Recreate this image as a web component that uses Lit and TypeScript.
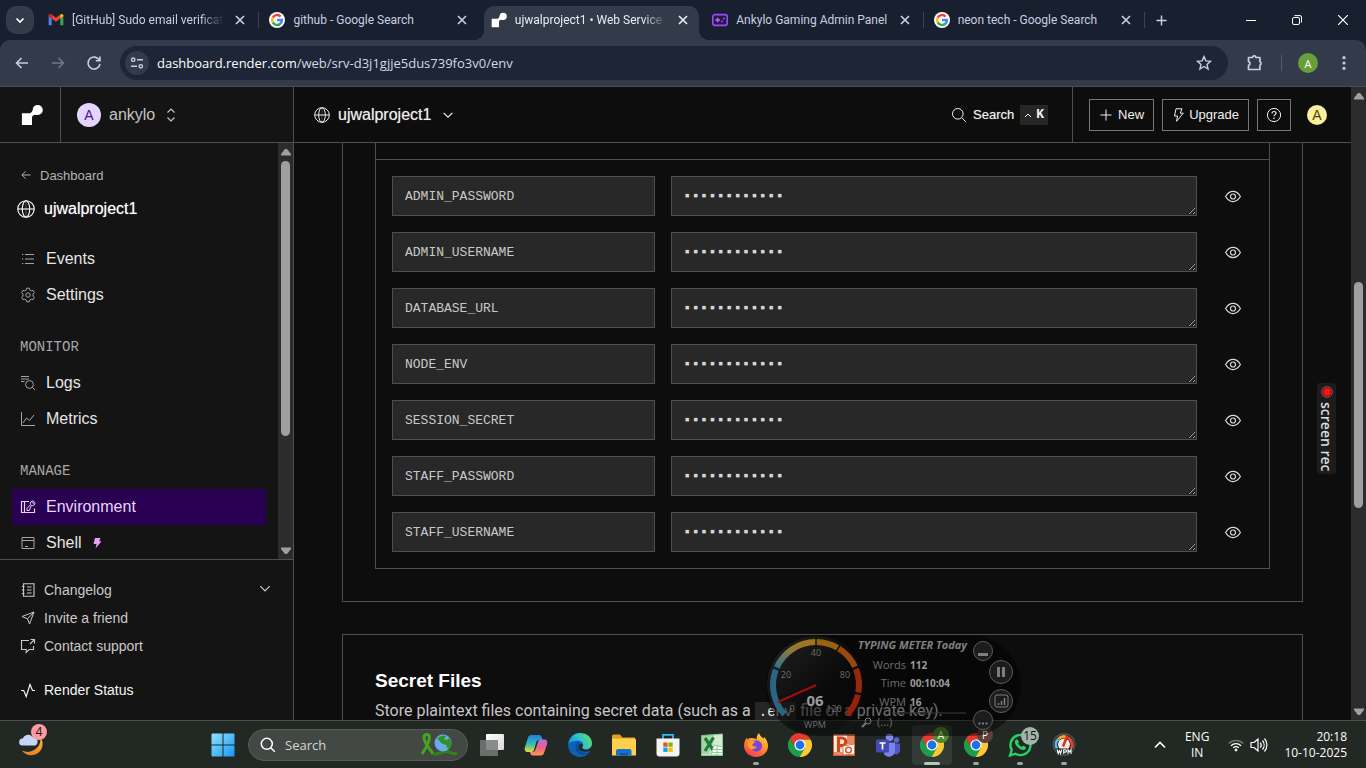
import { LitElement, html, svg, css, TemplateResult } from "lit";
import { customElement, property } from "lit/decorators.js";
import { classMap } from "lit/directives/class-map.js";

const line = (size: number, body: unknown, box = 16) => html`<svg
  width=${size}
  height=${size}
  viewBox="0 0 ${box} ${box}"
  fill="none"
  stroke="currentColor"
  aria-hidden="true"
>${body}</svg>`;
const pic = (size: number, body: unknown, box = 24) => html`<svg
  width=${size}
  height=${size}
  viewBox="0 0 ${box} ${box}"
  aria-hidden="true"
>${body}</svg>`;

/* ---------- line icons ---------- */
const globe = (s: number) => line(s, svg`<circle cx="8" cy="8" r="7.3"/><ellipse cx="8" cy="8" rx="3.3" ry="7.3"/><path d="M.7 8h14.6"/><path d="M8 .7v14.6" stroke-opacity=".25"/>`);
const chevronDown = (s: number) => line(s, svg`<path d="M3 5.5l5 5 5-5" stroke-width="1.3"/>`);
const chevronUpDown = line(16, svg`<path d="M4.500 5.500L8 2l3.500 3.500M4.500 10.500L8 14l3.500-3.500" stroke-width="1.200"/>`);
const searchIcon = (s: number) => line(s, svg`<circle cx="6.8" cy="6.8" r="5.3"/><path d="M10.8 10.8l4 4"/>`);
const cross = line(10, svg`<path d="M1 1l8 8M9 1l-8 8" stroke-width="1.7"/>`, 10);
const plus = (s: number, w: number) => line(s, svg`<path d="M6 .5v11M.5 6h11" stroke-width=${w}/>`, 12);
const eye = line(16, svg`<path d="M.6 8.500C2.600 5 5 3.400 8 3.400S13.400 5 15.400 8.500C13.400 12 11 13.600 8 13.600S2.600 12 .6 8.500z" stroke-width="1.200"/><circle cx="8" cy="8.500" r="2.500" stroke-width="1.200"/>`);
const bolt = line(14, svg`<path d="M5 .8h6L9.300 5.200h3L5.500 13.300 6.600 8H3.500z"/>`, 14);
const backArrow = (s: number, w: number) => line(s, svg`<path d="M14 8H2.500M7.500 3L2.500 8l5 5" stroke-width=${w}/>`);
const forwardArrow = line(16, svg`<path d="M2 8h11.500M8.500 3l5 5-5 5" stroke-width="1.500"/>`);
const reload = line(16, svg`<path d="M13.400 5.300A6 6 0 1 0 14 8.800M14 1.500v4.300H9.700" stroke-width="1.600"/>`);
const tune = line(14, svg`<circle cx="3.200" cy="3.700" r="1.700" stroke-width="1.400"/><path d="M7 3.700h6M1 10.300h6" stroke-width="1.400"/><circle cx="10.800" cy="10.300" r="1.700" stroke-width="1.400"/>`, 14);
const star = line(16, svg`<path d="M8 1.600l1.900 4.300 4.700.4-3.600 3.100 1.100 4.600L8 11.500 3.900 14 5 9.400 1.400 6.300l4.700-.4z" stroke-width="1.400"/>`);
const puzzle = line(18, svg`<path d="M2.500 3.500h4a1.700 1.700 0 0 1 3.400 0h4v4.300a1.800 1.800 0 0 1 0 3.400v4.300H2.500v-4.200a1.900 1.900 0 0 0 0-3.700z" stroke-width="1.700" stroke-linejoin="round"/>`, 18);
const dots = pic(16, svg`<g fill="#c3c8db"><circle cx="8" cy="2.700" r="1.600"/><circle cx="8" cy="8" r="1.600"/><circle cx="8" cy="13.300" r="1.600"/></g>`, 16);
const help = line(16, svg`<circle cx="8" cy="8" r="6.600"/><path d="M6 6.500C6 5.300 6.800 4.500 8 4.500s2 .7 2 1.800c0 1.300-2 1.400-2 3M8 10.600v1.400" stroke-width="1.200"/>`);

const navIcons: Record<string, TemplateResult> = {
  events: line(14, svg`<path d="M4 2.500h9M4 7h9M4 11.500h9M1 2.500h1.300M1 7h1.300M1 11.500h1.300"/>`, 14),
  settings: line(16, svg`<circle cx="8" cy="8" r="2.200"/><path d="M6.700 1.200h2.600l.4 1.700 1.600.9 1.700-.5 1.300 2.200-1.200 1.300v2.400l1.200 1.300-1.300 2.200-1.700-.5-1.600.9-.4 1.700H6.700l-.4-1.700-1.600-.9-1.700.5-1.300-2.200 1.200-1.300V6.800L1.700 5.500 3 3.300l1.700.5 1.600-.9z"/>`),
  logs: line(16, svg`<path d="M1 1.500h8M1 4h8M1 6.500h3.500"/><circle cx="9.500" cy="9.500" r="3.900"/><path d="M12.400 12.400l2.600 2.600"/>`),
  metrics: line(16, svg`<path d="M1.500 1v13.500H15"/><path d="M3 12l3.500-5 3 2.500L14 4"/>`),
  environment: line(16, svg`<path d="M9 2.500H1.500v11h13V9.500M4.500 2.500v11" stroke-width="1.200"/><path d="M7 11.500V9.300l3.600-3.600a2.500 2.500 0 0 1 3-3.600L12.200 3.600l.9.900 1.500-1.300a2.500 2.500 0 0 1-3.300 3.300L9.200 11.500z"/>`),
  shell: line(14, svg`<path d="M1 1.500h12v11H1zM1 4.500h12M4 10.500h3"/>`, 14),
  changelog: line(14, svg`<path d="M2.500.7h10.500v12.600H2.500zM.8 3.500h2.700M.8 7h2.700M.8 10.500h2.700M6 4h4.500M6 7h4.500M6 10h4.500" stroke-width="1.100"/>`, 14),
  invite: line(14, svg`<path d="M1 5.500L13 1 8.500 13 6.500 7.800zM6.500 7.800L13 1"/>`, 14),
  contact: line(16, svg`<path d="M9 2.500H1.500v9h4.700v3l3-3h4.300V8M10.500 1.500h4v4M14.500 1.500L10 6" stroke-width="1.100"/>`),
  status: line(16, svg`<path d="M1 8.500h2.700L6.200 14.500 10 2.500l2.500 6H15" stroke-width="1.200"/>`),
};

const renderMark = (s: number) => pic(s, svg`<path fill="#fff" d="M18.300 1a5.500 5.500 0 0 0-5.500 5c-.3 2.300-1.600 4-3.800 4H1v13h11V15c0-2 1.800-3.300 3.800-3.300 1 .2 1.700.3 2.500.3a5.500 5.500 0 1 0 0-11z"/>`);

/* ---------- coloured pictures ---------- */
const gmail = pic(16, svg`<path fill="#4285f4" d="M1 5v15h4.500V9.500z"/><path fill="#34a853" d="M23 5v15h-4.500V9.500z"/><path fill="#ea4335" d="M1 6.500V5c0-2 2.300-2.700 4-1.500l7 5.300 7-5.300v5.700l-7 5.300-7-5.300z"/><path fill="#c5221f" d="M1 5.500C1 3 3.500 2.500 5.500 4v5.600L1 6.300z"/><path fill="#fbbc04" d="M23 5.500c0-2.500-2.500-3-4.500-1.500v5.600L23 6.300z"/>`);
const google = pic(16, svg`<circle cx="12" cy="12" r="12" fill="#fff"/><g fill="none" stroke-width="3.600"><path stroke="#ea4335" d="M5.600 8.400A7.400 7.400 0 0 1 17.300 6.800"/><path stroke="#fbbc05" d="M5.600 15.600a7.400 7.400 0 0 1 0-7.200"/><path stroke="#34a853" d="M16.900 17.600a7.400 7.400 0 0 1-11.300-2"/><path stroke="#4285f4" d="M12 12h7.400a7.400 7.400 0 0 1-2.500 5.600"/></g>`);
const gamepad = pic(16, svg`<rect x="1.200" y="4" width="21.600" height="16" rx="3" fill="#2b1650" stroke="#9b4df0" stroke-width="2.400"/><path d="M8.500 8.500v7M5 12h7M14 14h2M17 10h2" stroke="#b06cf8" stroke-width="2.400"/>`);

const chromeShape = svg`<path fill="#e33b2e" d="M1.900 5.510A12 12 0 0 1 22.670 6.500H12L7.240 14.750z"/><path fill="#fcc934" d="M22.670 6.500A12 12 0 0 1 11.430 24l5.330-9.250L12 6.500z"/><path fill="#1e9e4a" d="M11.430 24A12 12 0 0 1 1.900 5.510l5.340 9.240h9.520z"/><circle cx="12" cy="12" r="5.600" fill="#fff"/><circle cx="12" cy="12" r="4.400" fill="#1a73e8"/>`;
const chrome = pic(24, chromeShape);

const windowsLogo = pic(24, svg`<defs><linearGradient id="win" x1="0" y1="0" x2="1" y2="1"><stop offset="0" stop-color="#8fe3ff"/><stop offset="1" stop-color="#1797f5"/></linearGradient></defs><path fill="url(#win)" d="M1.500.5H11.500V11.500H.5V1.500a1 1 0 0 1 1-1zM12.500.5h10a1 1 0 0 1 1 1v10h-11zM.5 12.500h11v11h-10a1 1 0 0 1-1-1zM12.500 12.500h11v10a1 1 0 0 1-1 1h-10z"/>`);
const taskView = pic(24, svg`<defs><linearGradient id="tv" x1="0" y1="0" x2="1" y2="1"><stop offset="0" stop-color="#fff"/><stop offset="1" stop-color="#d8d8d8"/></linearGradient></defs><rect x="6" y="1" width="18" height="16" rx="1" fill="url(#tv)"/><rect x="0" y="7" width="18" height="16" rx="1" fill="#777b79" fill-opacity=".85"/>`);
const copilot = pic(24, svg`<defs><linearGradient id="cpa" x1="0" y1="0" x2="0" y2="1"><stop offset="0" stop-color="#1f7de8"/><stop offset=".55" stop-color="#35c0a8"/><stop offset="1" stop-color="#f3d53a"/></linearGradient><linearGradient id="cpb" x1="0" y1="0" x2="0" y2="1"><stop offset="0" stop-color="#b06ee8"/><stop offset=".5" stop-color="#ee5f8d"/><stop offset="1" stop-color="#fb9a4b"/></linearGradient></defs><path fill="url(#cpa)" d="M7 2h8c2 0 2.600 1.500 3 3l.6 2H15c-1.600 0-2.300 1-2.800 2.600L10 17c-.5 1.600-1.600 2-3 2H3.500C.7 19 .3 16.500 1 14L4 4.500C4.500 3 5.500 2 7 2z"/><path fill="url(#cpb)" d="M17 22.500H9c-2 0-2.600-1.500-3-3L5.700 19H8c2 0 3-.8 3.500-2.500L14 9c.5-1.500 1-2.500 2.800-2.500h3.700c2.800 0 3.200 2.500 2.500 5l-3 8.500c-.6 1.500-1.500 2.500-3 2.500z"/>`);
const edge = pic(24, svg`<defs><linearGradient id="eda" x1="0" y1=".6" x2="1" y2=".2"><stop offset="0" stop-color="#1590dc"/><stop offset=".5" stop-color="#2bc3d2"/><stop offset="1" stop-color="#6bdd5a"/></linearGradient></defs><path fill="#0d62b8" d="M.1 11C3 4 14 5 15 12c-2-2-5-1-4.500 2.500C11.500 19 18 20 22.500 17.500 20 22 16 24 12 24 5 24-.5 18.500.1 11z"/><path fill="url(#eda)" d="M.2 11C1 4.500 6 0 12 0c7 0 12 4.600 12 10.400 0 3.600-2.700 6-6 6-2.600 0-3.800-1-3.800-1.800 0-.6.900-1 .9-2.800 0-2.300-2.200-4-5.300-4C5.500 7.800 1.500 9.500.2 11z"/><path fill="#0a4d96" d="M9.800 9.500C7 11.500 6.500 17 10.300 20c3.500 2.700 8 2 11.500-.8C18 20.700 12 20 10.800 16c-.7-2.400-.3-4.600 1-6z"/>`);
const folder = pic(24, svg`<path fill="#e0a019" d="M0 3a1.500 1.500 0 0 1 1.500-1.500H8l2.500 3H23V9H0z"/><path fill="#ffcf4d" d="M0 5.500h22.500A1.500 1.500 0 0 1 24 7v15.500H0z"/><path fill="#1573cf" d="M4 22.500V18a2 2 0 0 1 2-2h11.500a2 2 0 0 1 2 2v4.500z"/><path fill="#0b5aa8" d="M8 20h8v2.500H8z"/>`);
const store = pic(24, svg`<path d="M7 7V1.800h10V7" fill="none" stroke="#35b8ee" stroke-width="1.800"/><path fill="#f4f4f4" d="M.5 5.500h23v15a3 3 0 0 1-3 3h-17a3 3 0 0 1-3-3z"/><path fill="#f25022" d="M7.300 9.500h4.300v4.300H7.300z"/><path fill="#7fba00" d="M12.400 9.500h4.300v4.300h-4.300z"/><path fill="#00a4ef" d="M7.300 14.600h4.300v4.300H7.300z"/><path fill="#ffb900" d="M12.400 14.600h4.300v4.300h-4.300z"/>`);
const excel = pic(24, svg`<path fill="#d3ebd0" stroke="#8fc98f" d="M1.500 2.500L22.500 1v21.500H1.500z"/><path fill="#3f9b4a" d="M1 2.500L14 1v6L9 21.500l-8-.5z" fill-opacity=".3"/><path d="M5 5l8.500 12.500M13.500 4.500L5 18" stroke="#1d8036" stroke-width="3.200"/><path fill="#fff" stroke="#8cc894" d="M14 12l8.500 2v8H11z"/><path stroke="#8cc894" d="M13 16.500h9M12 19.500h10M17 13v9"/>`);
const powerpoint = pic(24, svg`<rect x="1" y="1" width="22" height="22" fill="#d65a30"/><path fill="#fbe9df" d="M2 2h20v20H2z"/><path fill="#e58a66" d="M15 2h7v9h-7zM2 19h9v3H2z"/><path d="M6.500 19V5H10a3.800 3.800 0 0 1 0 7.600H6.500" fill="none" stroke="#d04617" stroke-width="3.200"/><path fill="#fff" stroke="#e26a3d" d="M11 13l11.500-2v10L11 22z"/><circle cx="16.500" cy="17" r="2.800" fill="none" stroke="#d65a30" stroke-width="1.500"/>`);
const firefox = pic(24, svg`<defs><linearGradient id="ff" x1=".8" y1="0" x2=".2" y2="1"><stop offset="0" stop-color="#ffd83c"/><stop offset=".5" stop-color="#ff8a24"/><stop offset="1" stop-color="#f5325b"/></linearGradient></defs><path fill="url(#ff)" d="M15 0c1 3.200 3 4 4.500 5.800.5-.7.500-1.400.4-2C22.500 6 24 9.600 24 13c0 6.300-5.300 11-12 11S0 19 0 12.800C0 9.500 1 6.500 3 4.500c0 1 .3 1.500.8 2C5 5.200 6 4.800 8 5c2.500 0 4 .8 4.600 1.600C12.500 4.300 13.200 1.700 15 0z"/><circle cx="12.300" cy="13" r="5.800" fill="#7a45dd"/><path fill="#ff9f2c" d="M3.800 8.500C7 7 10 8 11.700 9.700c-2.200.2-3.700 1.200-3.200 2.800 1 1 2.800 1.300 4.300.7-.8 2.600-4.800 4-7 2.300C4 14 3.300 11 3.800 8.500z"/>`);
const teams = pic(24, svg`<circle cx="20.500" cy="7" r="2.800" fill="#5b62cf"/><circle cx="13.500" cy="4.500" r="3.800" fill="#8188e8"/><path fill="#5059c9" d="M16 10.500h8v7a4 4 0 0 1-6 3.300z"/><path fill="#7b83eb" d="M8 9.500h11v8.500a6 6 0 0 1-11 3z"/><rect x="0" y="6.500" width="13" height="13" rx="1.200" fill="#4349b5"/><path d="M3.500 10h6M6.500 10v6.500" stroke="#fff" stroke-width="1.700"/>`);
const whatsapp = pic(24, svg`<path d="M2 22.500l1.700-5.700A10 10 0 1 1 7.500 20.700z" fill="none" stroke="#27d366" stroke-width="2.400"/><path fill="#27d366" d="M8.500 6.500c-2.300 1-2.300 3.600.2 6.600 2.600 3.200 6 4.800 8 3.600 1.300-.8 1.500-2.500.8-2.900l-2.200-1.100c-.6-.2-1 1.200-1.600 1.200-1.300-.3-3-1.800-3.700-3.300 0-.5 1-1 .8-1.600l-1-2.200c-.2-.4-.8-.5-1.300-.3z"/>`);
const wpmApp = pic(24, svg`<circle cx="12" cy="11.500" r="11.500" fill="#4a4d50"/><circle cx="12" cy="11.500" r="9.800" fill="#111"/><g fill="none" stroke-width="2.800"><path stroke="#5db7e8" d="M5.200 16A8 8 0 0 1 6.300 6"/><path stroke="#f6a32c" d="M6.300 6A8 8 0 0 1 14.500 4"/><path stroke="#e8452b" d="M14.500 4A8 8 0 0 1 18.800 16"/></g><circle cx="12" cy="11.500" r="6" fill="#ececec"/><path d="M11 13.500l4-10" stroke="#e02a1d" stroke-width="2.500"/><path fill="#222" d="M3 15.500h18l-2.500 5.500h-13z"/><path d="M5 16.500l1.200 4 1.200-3 1.200 3 1.200-4M11.700 21v-4.300h1.600a1.200 1.200 0 0 1 0 2.400h-1.600M16 21v-4.300l1.500 2.300 1.500-2.300V21" fill="none" stroke="#fff" stroke-width="1.100"/>`);
const weather = pic(28, svg`<defs><linearGradient id="moon" x1="0" y1="0" x2="0" y2="1"><stop offset="0" stop-color="#fbc53a"/><stop offset="1" stop-color="#ee7d25"/></linearGradient></defs><path fill="url(#moon)" d="M22.500 6.500A10.500 10.500 0 1 1 4 19.500 13 13 0 0 0 22.500 6.500z"/><path fill="#c6d7f5" d="M4.500 14.500a3.500 3.500 0 0 1 .3-7A5.500 5.500 0 0 1 14 5.500a5 5 0 0 1 3.500 9z"/>`, 28);
const ribbonEarth = html`<svg width="40" height="26" viewBox="0 0 40 26" aria-hidden="true"><g fill="none" stroke="#43a51f" stroke-width="3"><path d="M3 22C7 16 10.500 10 10.500 5.500 10.500 1.500 5 1.500 5 5.500 5 11 11 17 14 22"/><path stroke="#2f8418" d="M14 22c7 1 10-4 16-2 3 1 5 3 8 1"/></g><circle cx="24" cy="11" r="8.500" fill="#6ba9e8"/><path fill="#2f9324" d="M18 7c2-3 6-4 9-3l-2 3 3 1 2-2c2 2 3 5 2 8l-3 3c-1-1-1-3-2-4l-3-1c-3-1-3-4-6-5z"/></svg>`;
const wifi = line(16, svg`<path d="M.8 6.500a10.200 10.200 0 0 1 14.400 0" stroke-opacity=".35" stroke-width="1.300"/><path d="M3 8.700a7 7 0 0 1 10 0M5.200 10.900a4 4 0 0 1 5.600 0" stroke-width="1.300"/><circle cx="8" cy="13" r="1" fill="currentColor"/>`);
const speaker = line(18, svg`<path d="M1 6.500h3L8 3v12l-4-3.500H1zM10.300 6.500a4 4 0 0 1 0 5M12.500 4.500a7 7 0 0 1 0 9M14.500 2.500a10 10 0 0 1 0 13" stroke-width="1.200"/>`, 18);

/* ---------- scroll bar ---------- */
@customElement("scroll-rail")
class ScrollRail extends LitElement {
  @property({ type: Number }) start = 0;
  @property({ type: Number }) size = 50;
  static styles = css`
    :host { display: flex; flex-direction: column; width: 15px; background: #2c2c2c; }
    .cap { height: 18px; display: grid; place-items: center; color: #9f9f9f; }
    .cap:last-child { height: 16px; }
    .lane { flex: 1; padding: 0 3px; }
    .space { height: var(--start); }
    .thumb { height: var(--size); border-radius: 5px; background: #9f9f9f; }
  `;
  render() {
    return html`
      <div class="cap"><svg width="10" height="8" viewBox="0 0 10 8"><path fill="currentColor" d="M4 1h2l4 5v1.500H0V6z"/></svg></div>
      <div class="lane" style="--start:${this.start}%;--size:${this.size}%">
        <div class="space"></div><div class="thumb"></div>
      </div>
      <div class="cap"><svg width="10" height="8" viewBox="0 0 10 8"><path fill="currentColor" d="M4 7h2l4-5V.5H0V2z"/></svg></div>`;
  }
}

/* ---------- browser window frame ---------- */
@customElement("browser-bar")
class BrowserBar extends LitElement {
  static styles = css`
    :host { display: block; background: #18202f; color: #c9cee0; font-family: "Segoe UI", "Open Sans", "Noto Sans", sans-serif; font-size: 12px; }
    button { border: 0; padding: 0; background: none; color: inherit; font: inherit; display: grid; place-items: center; }
    .strip { display: flex; height: 40px; align-items: center; padding-left: 6px; }
    .list { width: 28px; height: 28px; border-radius: 10px; background: #333a4a; color: #fff; margin-right: 4px; }
    .tabs { display: flex; flex: 0 1 1107px; min-width: 0; height: 100%; }
    .tab { position: relative; flex: 1; min-width: 0; display: flex; align-items: center; gap: 8px; padding: 0 11px 0 10px; }
    .tab svg { flex: none; }
    .title { flex: 1; white-space: nowrap; overflow: hidden; line-height: 20px; font-family: "Segoe UI", Roboto, sans-serif; }
    .fade { mask-image: linear-gradient(90deg, #000 calc(100% - 24px), transparent); }
    .close { width: 16px; height: 16px; flex: none; }
    .rule { width: 1px; height: 16px; background: #3a4254; }
    .tab .rule { position: absolute; right: 0; top: 12px; }
    .active { color: #e9ecf5; }
    .active .face { position: absolute; inset: 6px 3px 0; background: #333a4a; border-radius: 10px 10px 0 0; }
    .active .face::before, .active .face::after { content: ""; position: absolute; bottom: 0; width: 10px; height: 10px; }
    .active .face::before { left: -10px; background: radial-gradient(circle at 0 0, transparent 10px, #333a4a 10px); }
    .active .face::after { right: -10px; background: radial-gradient(circle at 100% 0, transparent 10px, #333a4a 10px); }
    .active > :not(.face) { position: relative; }
    .new { width: 32px; height: 32px; }
    .window { display: flex; margin-left: auto; color: #fff; }
    .window button { width: 46px; height: 40px; }
    .bar { display: flex; align-items: center; height: 46px; background: #333a4a; border-bottom: 1px solid #494d57; border-radius: 10px 10px 0 0; padding: 0 6px 0 4px; }
    .nav { width: 36px; height: 36px; }
    .off { color: #72798a; }
    .address { flex: 1; min-width: 0; display: flex; align-items: center; height: 34px; margin: 0 12px 0 8px; padding: 0 16px 0 5px; border-radius: 17px; background: #1d2536; }
    .info { width: 24px; height: 24px; border-radius: 50%; background: #333a4a; margin-right: 8px; }
    .url { flex: 1; min-width: 0; color: #d5d8e4; font-size: 13px; line-height: 20px; white-space: nowrap; }
    .host { color: #fff; }
    .side { width: 30px; height: 30px; }
    .bar .rule { margin: 0 16px 0 11px; background: #535b6d; }
    .avatar { width: 20px; height: 20px; border-radius: 50%; background: #689f38; color: #fff; font-size: 11px; }
    .menu { margin-left: 10px; width: 32px; height: 32px; }
  `;
  private tabs = [
    { icon: gmail, title: "[GitHub] Sudo email verificat", fade: true },
    { icon: google, title: "github - Google Search" },
    { icon: renderMark(16), title: "ujwalproject1 • Web Service", active: true, fade: true },
    { icon: gamepad, title: "Ankylo Gaming Admin Panel" },
    { icon: google, title: "neon tech - Google Search" },
  ];
  render() {
    return html`
      <div class="strip">
        <button class="list" aria-label="Search tabs">${line(10, svg`<path d="M1.500 3.500L5 7l3.500-3.500" stroke-width="1.700"/>`, 10)}</button>
        <div class="tabs">
          ${this.tabs.map((t, i) => html`<div class=${classMap({ tab: true, active: !!t.active })}>
            ${t.active ? html`<div class="face"></div>` : ""}
            ${t.icon}<span class=${classMap({ title: true, fade: !!t.fade })}>${t.title}</span>
            <button class="close" aria-label="Close tab">${cross}</button>
            ${t.active || this.tabs[i + 1]?.active ? "" : html`<span class="rule"></span>`}
          </div>`)}
        </div>
        <button class="new" aria-label="New tab">${plus(11, 1.6)}</button>
        <div class="window">
          <button aria-label="Minimize">${line(10, svg`<path d="M0 5.500h10"/>`, 10)}</button>
          <button aria-label="Restore">${line(10, svg`<rect x=".5" y="2.500" width="7" height="7" rx="1.500"/><path d="M2.500.6H8A1.500 1.500 0 0 1 9.500 2v5.500"/>`, 10)}</button>
          <button aria-label="Close">${line(10, svg`<path d="M0 0l10 10M10 0L0 10" stroke-width="1.200"/>`, 10)}</button>
        </div>
      </div>
      <div class="bar">
        <button class="nav" aria-label="Back">${backArrow(16, 1.6)}</button>
        <button class="nav off" aria-label="Forward">${forwardArrow}</button>
        <button class="nav" aria-label="Reload">${reload}</button>
        <div class="address">
          <button class="info" aria-label="Site information">${tune}</button>
          <span class="url"><span class="host">dashboard.render.com</span>/web/srv-d3j1gjje5dus739fo3v0/env</span>
          <button aria-label="Bookmark">${star}</button>
        </div>
        <button class="side" aria-label="Extensions">${puzzle}</button>
        <span class="rule"></span>
        <button class="avatar" aria-label="Profile">A</button>
        <button class="menu" aria-label="Menu">${dots}</button>
      </div>`;
  }
}

/* ---------- dashboard ---------- */
@customElement("dashboard-header")
class DashboardHeader extends LitElement {
  static styles = css`
    :host { display: flex; height: 55px; flex: none; border-bottom: 1px solid #4f4f4f; color: #f0f0f0; font-size: 13px; }
    button, a { box-sizing: border-box; font: inherit; color: inherit; background: none; border: 0; padding: 0; display: flex; align-items: center; text-decoration: none; white-space: nowrap; }
    .logo { width: 61px; border-right: 1px solid #4f4f4f; background: #141414; justify-content: center; padding-left: 4px; }
    .team { width: 233px; border-right: 1px solid #4f4f4f; background: #141414; padding-left: 16px; gap: 8px; font-size: 16px; color: #c4c4c4; }
    .disc { width: 24px; height: 24px; border-radius: 50%; background: #e5d5fd; color: #4b0e94; display: grid; place-items: center; font-size: 14px; }
    .project { padding-left: 20px; gap: 8px; font-size: 16px; text-shadow: 0 0 1px #f0f0f080; }
    .project svg:last-child { margin-left: 2px; }
    .search { margin-left: auto; padding-right: 24px; gap: 6px; text-shadow: 0 0 1px #f0f0f080; }
    kbd { display: flex; align-items: center; gap: 4px; height: 20px; padding: 0 4px; background: #262626; font: bold 13px "Liberation Mono", monospace; text-shadow: none; }
    .actions { display: flex; align-items: center; gap: 8px; padding: 0 24px 0 16px; border-left: 1px solid #4f4f4f; text-shadow: 0 0 1px #f0f0f080; }
    .boxed { height: 32px; padding: 0 9px 0 8px; border: 1px solid #767676; gap: 4px; }
    .help { padding: 0 8px; }
    .user { width: 20px; height: 20px; margin-left: 8px; border-radius: 50%; background: #fbef9c; color: #4d4200; justify-content: center; font-size: 14px; text-shadow: none; }
  `;
  render() {
    return html`
      <a class="logo" href="#" aria-label="Home">${renderMark(22)}</a>
      <button class="team"><span class="disc">A</span>ankylo ${chevronUpDown}</button>
      <button class="project">${globe(16)}<span>ujwalproject1</span>${chevronDown(14)}</button>
      <button class="search">${searchIcon(16)}<span>Search</span><kbd>${line(8, svg`<path d="M1 6l3-3 3 3"/>`, 8)}K</kbd></button>
      <div class="actions">
        <button class="boxed">${line(16, svg`<path d="M8 2.500v11M2.500 8h11"/>`)}New</button>
        <button class="boxed">${bolt}Upgrade</button>
        <button class="boxed help" aria-label="Help">${help}</button>
        <button class="user" aria-label="Account">A</button>
      </div>`;
  }
}

@customElement("dashboard-sidebar")
class DashboardSidebar extends LitElement {
  static styles = css`
    :host { display: flex; flex-direction: column; width: 293px; flex: none; border-right: 1px solid #4f4f4f; background: #141414; color: #e6e6e6; }
    a, button { font: inherit; color: inherit; text-decoration: none; background: none; border: 0; padding: 0; display: flex; align-items: center; }
    svg { flex: none; }
    .scroll { display: flex; flex: 1; min-height: 0; }
    nav { flex: 1; overflow: hidden; padding: 22px 12px 0; font-size: 16px; }
    .back { height: 20px; padding-left: 8px; gap: 8px; color: #b3b3b3; font-size: 13px; }
    .service { height: 32px; margin: 8px 0 16px; padding-left: 5px; gap: 9px; color: #fff; text-shadow: 0 0 1px #ffffff80; }
    .item { height: 36px; padding-left: 8px; gap: 10px; }
    .item svg { width: 16px; color: #a5a5a5; }
    .on { background: #2a0052; color: #e8d5ff; }
    .on svg { color: #e8d5ff; }
    .item .flash { width: 10px; }
    h2 { margin: 16px 0 0; height: 36px; padding-left: 8px; display: flex; align-items: center; font: 14px "Liberation Mono", monospace; color: #a8a8a8; }
    .foot { border-top: 1px solid #4f4f4f; padding: 16px 20px; font-size: 14px; color: #c9c9c9; }
    .foot a, .foot button { height: 28px; gap: 8px; width: 100%; }
    .foot svg:first-child { width: 16px; }
    .more { margin-left: auto; }
    .foot .status { margin-top: 16px; color: #f4f4f4; }
  `;
  private link(icon: string, text: string, on = false, flash = false) {
    return html`<a class=${classMap({ item: true, on })} href="#">${navIcons[icon]}${text}${flash
      ? html`<svg class="flash" width="10" height="12" viewBox="0 0 10 12"><path fill="#ee9cf8" d="M3 1h5.500L7.300 4.200H9.500L3.500 11.500 4.500 7H1.500z"/></svg>`
      : ""}</a>`;
  }
  render() {
    return html`
      <div class="scroll">
        <nav>
          <a class="back" href="#">${backArrow(12, 1.3)}Dashboard</a>
          <a class="service" href="#">${globe(18)}ujwalproject1</a>
          ${this.link("events", "Events")} ${this.link("settings", "Settings")}
          <h2>MONITOR</h2>
          ${this.link("logs", "Logs")} ${this.link("metrics", "Metrics")}
          <h2>MANAGE</h2>
          ${this.link("environment", "Environment", true)} ${this.link("shell", "Shell", false, true)}
        </nav>
        <scroll-rail .start=${0} .size=${72}></scroll-rail>
      </div>
      <div class="foot">
        <button>${navIcons.changelog}Changelog<span class="more">${chevronDown(15)}</span></button>
        <a href="#">${navIcons.invite}Invite a friend</a>
        <a href="#">${navIcons.contact}Contact support</a>
        <a class="status" href="#">${navIcons.status}Render Status</a>
      </div>`;
  }
}

@customElement("environment-page")
class EnvironmentPage extends LitElement {
  static styles = css`
    :host { display: block; flex: 1; min-width: 0; overflow: hidden; padding: 0 48px; color: #e6e6e6; }
    .card { border: 1px solid #4f4f4f; padding: 32px; margin-bottom: 32px; }
    .cut { border-top: 0; padding-top: 0; }
    .table { border: 1px solid #4f4f4f; border-top: 0; }
    .head { height: 16px; border-bottom: 1px solid #4f4f4f; }
    .rows { display: grid; gap: 16px; padding: 16px; }
    .row { display: grid; grid-template-columns: 1fr 2fr 40px; gap: 16px; height: 40px; }
    input, textarea { box-sizing: border-box; width: 100%; min-width: 0; height: 40px; margin: 0; border: 1px solid #4f4f4f; border-radius: 0; outline: 0; background: #282828; color: #c8c8c8; padding: 0 12px; font: 13px "Liberation Mono", monospace; }
    textarea { padding: 9px 11px 0; font-size: 14px; line-height: 20px; resize: vertical; overflow: hidden; color-scheme: dark; color: #d8d8d8; }
    button { border: 0; background: none; color: #d8d8d8; padding: 0; display: grid; place-items: center; }
    h2 { margin: 0; font-size: 19px; line-height: 28px; color: #fff; }
    p { margin: 4px 0 0; font: 16px/24px Roboto, "Liberation Sans", sans-serif; color: #c6c6c6; white-space: nowrap; }
    code { font: 14px "Liberation Mono", monospace; background: #262626; color: #e6e6e6; padding: 2px 4px; }
  `;
  private keys = ["ADMIN_PASSWORD", "ADMIN_USERNAME", "DATABASE_URL", "NODE_ENV", "SESSION_SECRET", "STAFF_PASSWORD", "STAFF_USERNAME"];
  render() {
    return html`
      <section class="card cut">
        <div class="table">
          <div class="head"></div>
          <div class="rows">
            ${this.keys.map((k) => html`<div class="row">
              <input type="text" aria-label="Key" .value=${k} />
              <textarea aria-label="Value of ${k}" rows="1" .value=${"▪".repeat(12)}></textarea>
              <button aria-label="Show value">${eye}</button>
            </div>`)}
          </div>
        </div>
      </section>
      <section class="card">
        <h2>Secret Files</h2>
        <p>Store plaintext files containing secret data (such as a <code>.env</code> file or a private key).</p>
      </section>`;
  }
}

/* ---------- taskbar ---------- */
@customElement("task-bar")
class TaskBar extends LitElement {
  static styles = css`
    :host { display: flex; align-items: center; height: 47px; flex: none; border-top: 1px solid #4a4f4c; background: #222824; color: #fff; font: 12px "Segoe UI", "Open Sans", "Noto Sans", sans-serif; }
    button { font: inherit; color: inherit; background: none; border: 0; padding: 0; position: relative; display: grid; place-items: center; }
    .lead { flex: 0 1 201px; min-width: 64px; }
    .weather { width: 40px; height: 40px; margin-left: 12px; }
    .app { width: 40px; height: 40px; margin: 0 2px; border-radius: 4px; flex: none; }
    .search { display: flex; align-items: center; box-sizing: border-box; width: 220px; height: 32px; margin: 0 2px 0 3px; padding: 0 8px 0 11px; gap: 9px; border: 1px solid #555b57; border-radius: 16px; background: #434845; }
    .search svg { flex: none; }
    input { flex: 1; min-width: 0; border: 0; padding: 0; outline: 0; background: none; color: #fff; font: 13px "Segoe UI", "Open Sans", sans-serif; }
    input::placeholder { color: #d3d5d4; opacity: 1; }
    .badge { position: absolute; top: 2px; right: 3px; min-width: 16px; height: 16px; line-height: 16px; border-radius: 8px; text-align: center; background: #ff99a4; color: #111; }
    .weather .badge { top: -1px; right: 5px; }
    .count { background: #a3b3a9; right: 1px; min-width: 18px; height: 18px; line-height: 18px; border-radius: 9px; }
    .green { background: #4f8a2b; color: #fff; font-size: 10px; }
    .brown { background: #5d4037; color: #fff; font-size: 10px; }
    .front { background: #343a36; }
    .run::after { content: ""; position: absolute; bottom: 0; width: 6px; height: 3px; border-radius: 2px; background: #9da39f; }
    .front::after { width: 16px; background: #b5c9bb; }
    .tray { display: flex; align-items: center; gap: 6px; margin-left: auto; padding-right: 19px; line-height: 16px; }
    .lang { text-align: center; margin: 0 13px; }
    .clock { text-align: right; margin-left: 10px; }
  `;
  private apps: { name: string; icon: TemplateResult; run?: boolean; front?: boolean; badge?: string; tone?: string }[] = [
    { name: "Task view", icon: taskView },
    { name: "Copilot", icon: copilot },
    { name: "Edge", icon: edge },
    { name: "File Explorer", icon: folder },
    { name: "Store", icon: store },
    { name: "Excel", icon: excel },
    { name: "Firefox", icon: firefox, run: true },
    { name: "Chrome", icon: chrome },
    { name: "PowerPoint", icon: powerpoint },
    { name: "Teams", icon: teams },
    { name: "Chrome, A", icon: chrome, run: true, front: true, badge: "A", tone: "green" },
    { name: "Chrome, P", icon: chrome, run: true, badge: "P", tone: "brown" },
    { name: "WhatsApp", icon: whatsapp, run: true, badge: "15", tone: "count" },
    { name: "Typing meter", icon: wpmApp, run: true },
  ];
  render() {
    return html`
      <div class="lead"><button class="weather" aria-label="Weather">${weather}<span class="badge">4</span></button></div>
      <button class="app" aria-label="Start">${windowsLogo}</button>
      <label class="search">${line(16, svg`<circle cx="6.800" cy="6.800" r="5.500" stroke-width="1.500"/><path d="M10.800 10.800l4 4" stroke-width="1.500"/>`)}
        <input type="text" placeholder="Search" aria-label="Search" />${ribbonEarth}</label>
      ${this.apps.map((a) => html`<button class=${classMap({ app: true, run: !!a.run, front: !!a.front })} aria-label=${a.name}>
        ${a.icon}${a.badge ? html`<span class="badge ${a.tone}">${a.badge}</span>` : ""}
      </button>`)}
      <div class="tray">
        <button aria-label="Hidden icons">${line(12, svg`<path d="M1 8.500l5-5 5 5" stroke-width="1.600"/>`, 12)}</button>
        <div class="lang">ENG<br />IN</div>
        ${wifi}${speaker}
        <div class="clock">20:18<br />10-10-2025</div>
      </div>`;
  }
}

/* ---------- floating typing meter ---------- */
@customElement("typing-meter")
class TypingMeter extends LitElement {
  static styles = css`
    :host { display: block; width: 256px; height: 102px; pointer-events: none; }
    svg { display: block; font-family: "Segoe UI", "Open Sans", "Noto Sans", sans-serif; }
    .dim { fill: #6e6e6e; }
    .lit { fill: #9b9b9b; font-weight: bold; }
  `;
  render() {
    const arc = (a: number, b: number, c: string) => {
      const p = (d: number) => `${50 + 43 * Math.cos((d * Math.PI) / 180)} ${50 + 43 * Math.sin((d * Math.PI) / 180)}`;
      return svg`<path d="M${p(a)}A43 43 0 0 1 ${p(b)}" fill="none" stroke=${c} stroke-width="6"/>`;
    };
    const knob = (x: number, y: number, r: number) => svg`<circle cx=${x} cy=${y} r=${r} fill="#1c1c1c" stroke="#5c5c5c"/>`;
    return html`<svg width="256" height="102" viewBox="0 0 256 102" role="img" aria-label="Typing meter">
      <defs>
        <linearGradient id="warm" x1="0" y1="1" x2="1" y2="0"><stop offset="0" stop-color="#33708c"/><stop offset=".5" stop-color="#8c7a3c"/><stop offset="1" stop-color="#a87316"/></linearGradient>
        <linearGradient id="dial" x1="0" y1="0" x2="1" y2="1"><stop offset="0" stop-color="#4a4a4a"/><stop offset=".6" stop-color="#0c0c0c"/></linearGradient>
      </defs>
      <path fill="#000" fill-opacity=".45" d="M50 0H204A51 50.500 0 0 1 204 101H50A50.500 50.500 0 0 1 50 0z"/>
      <circle cx="50" cy="50" r="49" fill="url(#dial)" fill-opacity=".4"/>
      ${arc(137, 201, "#2b6583")}${arc(204, 269, "url(#warm)")}${arc(271, 300, "#9a6314")}${arc(302, 335, "#99480f")}${arc(338, 370, "#97280c")}${arc(373, 403, "#98200d")}
      <path d="M50 50L12 67" stroke="#a30d0d" stroke-width="2"/>
      <g class="dim" font-size="9" text-anchor="middle">
        <text x="26" y="77">0</text><text x="20" y="43">20</text><text x="50" y="21">40</text><text x="79" y="43">80</text><text x="68" y="77">120</text>
        <text x="49" y="93">WPM</text>
      </g>
      <text class="lit" x="49" y="71" font-size="15" text-anchor="middle">06</text>
      <text x="92" y="14" font-size="11" font-weight="bold" font-style="italic" fill="#808080">TYPING METER Today</text>
      <g class="dim" font-size="11" text-anchor="end"><text x="140" y="34">Words</text><text x="140" y="52">Time</text><text x="140" y="71">WPM</text></g>
      <g class="lit" font-size="10"><text x="144" y="34">112</text><text x="144" y="52">00:10:04</text><text x="144" y="71">16</text></g>
      <path d="M126 78h74" stroke="#3c3c3c"/>
      <g fill="none" stroke="#777"><circle cx="102" cy="86" r="3"/><path d="M100 88l-4 4" stroke-width="2"/></g>
      <text class="dim" x="111" y="91" font-size="11">(...)</text>
      ${knob(217, 16, 9.5)}${knob(235, 37, 11.5)}${knob(235, 66, 11.5)}${knob(217, 85, 9.5)}
      <g stroke="#7d7d7d" fill="none"><path d="M212 19.500h10M232.500 32v10M237.500 32v10" stroke-width="3"/>
        <rect x="229" y="60" width="13" height="12" rx="2"/><path d="M232.500 70v-2M235.500 70v-4M238.500 70v-7" stroke-width="1.500"/><path d="M212.500 88.500h9" stroke-width="2" stroke-dasharray="2 1.500"/></g>
    </svg>`;
  }
}

@customElement("app-root")
class AppRoot extends LitElement {
  static styles = css`
    :host { position: relative; display: flex; flex-direction: column; height: 100vh; overflow: hidden; background: #0d0d0d; font-family: "Liberation Sans", Arial, sans-serif; }
    .view { display: flex; flex: 1; min-height: 0; }
    .page { flex: 1; min-width: 0; display: flex; flex-direction: column; }
    .body { flex: 1; min-height: 0; display: flex; }
    .recorder { position: absolute; right: 30px; top: 383px; display: flex; flex-direction: column; align-items: center; gap: 4px; padding: 3px 0 2px; width: 19px; border: 0; border-radius: 3px; background: #1c1c1c; color: #ddd; }
    .recorder span { writing-mode: vertical-rl; line-height: 19px; font: 600 14px "Open Sans", sans-serif; }
    .meter { position: absolute; right: 344px; bottom: 31px; }
  `;
  render() {
    return html`
      <browser-bar></browser-bar>
      <div class="view">
        <div class="page">
          <dashboard-header></dashboard-header>
          <div class="body">
            <dashboard-sidebar></dashboard-sidebar>
            <environment-page></environment-page>
          </div>
        </div>
        <scroll-rail .start=${29.6} .size=${37.7}></scroll-rail>
      </div>
      <task-bar></task-bar>
      <button class="recorder">
        <svg width="12" height="12" viewBox="0 0 12 12" aria-hidden="true"><circle cx="6" cy="6" r="5.300" fill="none" stroke="#c44"/><circle cx="6" cy="6" r="3.900" fill="#f11"/></svg>
        <span>screen rec</span>
      </button>
      <typing-meter class="meter"></typing-meter>`;
  }
}
